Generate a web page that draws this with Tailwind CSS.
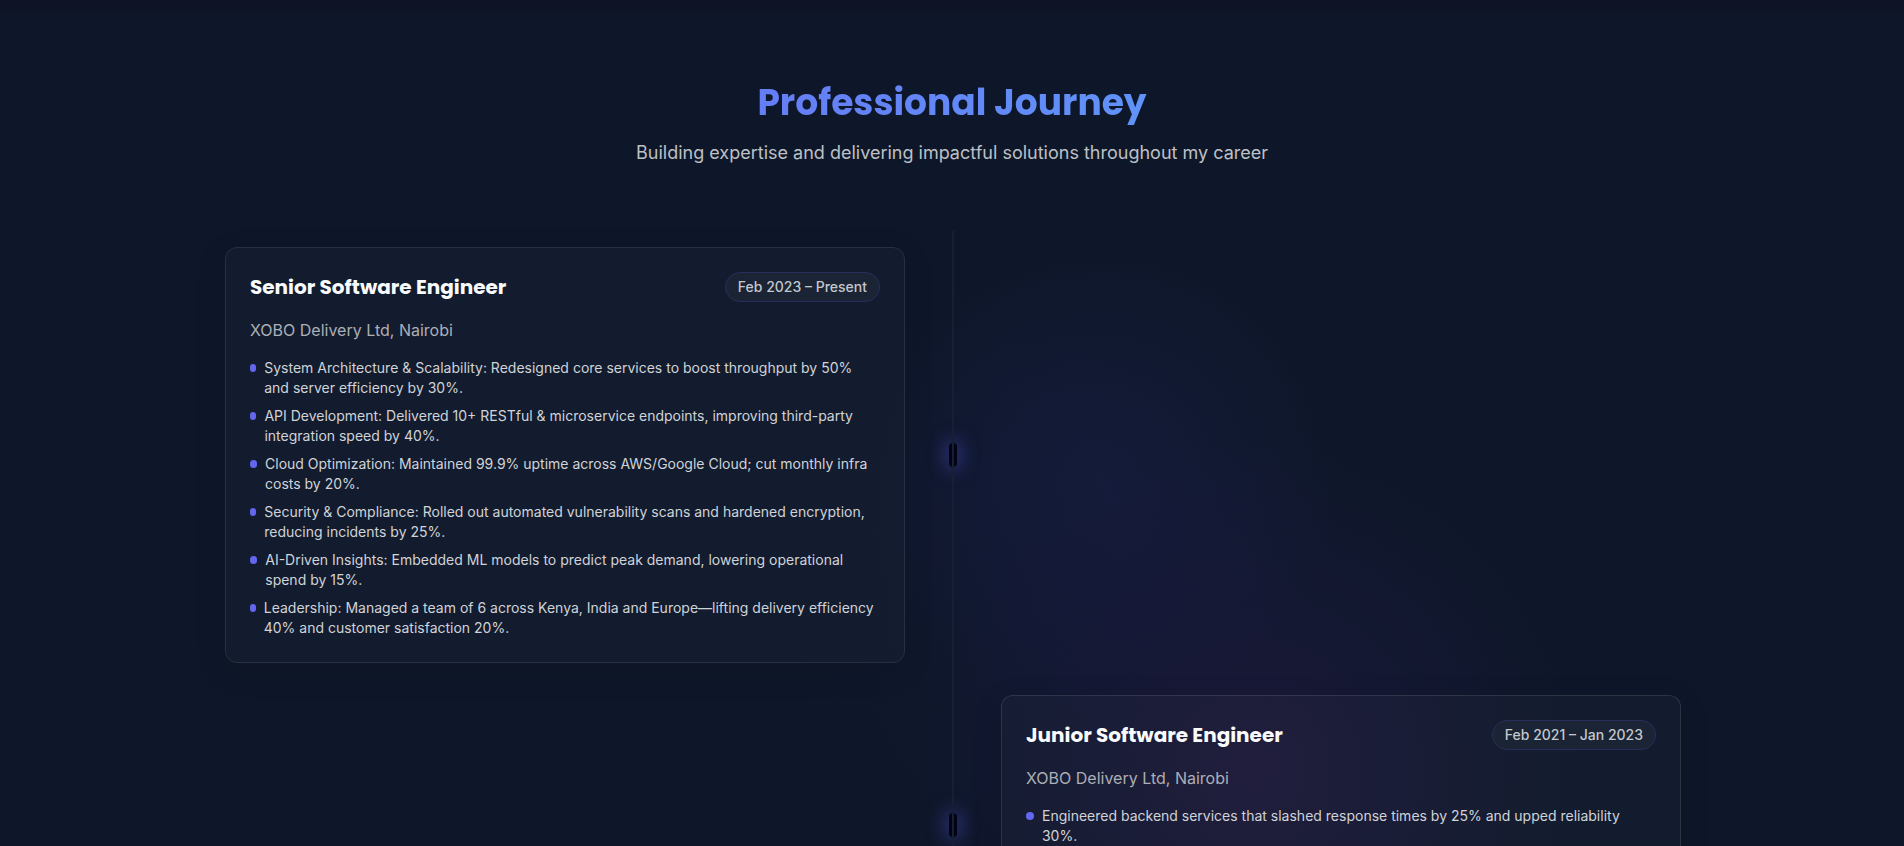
<!DOCTYPE html>
<html lang="en">
<head>
<meta charset="utf-8">
<meta name="viewport" content="width=device-width, initial-scale=1">
<title>Professional Journey</title>
<script src="https://cdn.jsdelivr.net/npm/@tailwindcss/browser@4"></script>
</head>
<body class="h-screen overflow-hidden bg-[#0e1729] font-['Inter',sans-serif] text-[#d0d3d8]">
<main class="relative isolate min-h-screen overflow-hidden bg-linear-to-b from-[#0e1225] to-transparent to-[20px] px-6 pt-20">
  <!-- ambient glow -->
  <div class="absolute -z-10 left-1/2 top-[240px] size-[480px] -translate-x-[90px] bg-[radial-gradient(closest-side,rgba(36,38,96,0.3),rgba(30,32,88,0.16)_55%,transparent)]"></div>
  <div class="absolute -z-10 left-1/2 top-[440px] size-[660px] -translate-x-[30px] bg-[radial-gradient(closest-side,rgba(54,28,88,0.34),rgba(42,26,84,0.2)_50%,transparent)]"></div>
  <div class="absolute -z-10 left-1/2 top-[280px] h-[640px] w-[400px] -translate-x-[160px] bg-[radial-gradient(closest-side,rgba(26,26,72,0.14),transparent)]"></div>

  <header class="flex flex-col items-center gap-4 text-center">
    <h1 class="bg-linear-to-r from-[#657df5] to-[#6092f8] bg-clip-text font-['Poppins','Inter',sans-serif] text-4xl leading-[45px] font-bold text-transparent">Professional Journey</h1>
    <p class="text-lg leading-6 text-[#bdc0c5]">Building expertise and delivering impactful solutions throughout my career</p>
  </header>

  <section class="relative mx-auto mt-[66px] flex max-w-[1458px] flex-col gap-8 pt-4 pl-[2px]">
    <div class="absolute top-0 bottom-0 left-1/2 w-[2px] bg-[#152033]"></div>

    <div class="grid grid-cols-[1fr_96px_1fr] items-center">
      <article class="rounded-xl border border-[#273041] bg-white/[0.025] p-6 shadow-[0_8px_32px_rgba(0,0,0,0.1)]">
        <div class="flex items-center justify-between">
          <h2 class="font-['Poppins','Inter',sans-serif] text-xl leading-[30px] font-bold text-slate-50">Senior Software Engineer</h2>
          <span class="rounded-full border border-[#262f5c] bg-[#1a2434] px-3 py-1 text-sm leading-5 font-medium text-[#c4c7cd]">Feb 2023 – Present</span>
        </div>
        <p class="mt-4 text-base leading-6 text-[#acafb6]">XOBO Delivery Ltd, Nairobi</p>
        <ul class="mt-4 flex flex-col gap-2 text-sm leading-5">
          <li class="flex items-start gap-2"><span class="mt-1.5 h-2 w-2 rounded-full bg-[#6366f1]"></span><span>System Architecture &amp; Scalability: Redesigned core services to boost throughput by 50% and server efficiency by 30%.</span></li>
          <li class="flex items-start gap-2"><span class="mt-1.5 h-2 w-2 rounded-full bg-[#6366f1]"></span><span>API Development: Delivered 10+ RESTful &amp; microservice endpoints, improving third-party integration speed by 40%.</span></li>
          <li class="flex items-start gap-2"><span class="mt-1.5 h-2 w-2 rounded-full bg-[#6366f1]"></span><span>Cloud Optimization: Maintained 99.9% uptime across AWS/Google Cloud; cut monthly infra costs by 20%.</span></li>
          <li class="flex items-start gap-2"><span class="mt-1.5 h-2 w-2 rounded-full bg-[#6366f1]"></span><span>Security &amp; Compliance: Rolled out automated vulnerability scans and hardened encryption, reducing incidents by 25%.</span></li>
          <li class="flex items-start gap-2"><span class="mt-1.5 h-2 w-2 rounded-full bg-[#6366f1]"></span><span>AI-Driven Insights: Embedded ML models to predict peak demand, lowering operational spend by 15%.</span></li>
          <li class="flex items-start gap-2"><span class="mt-1.5 h-2 w-2 rounded-full bg-[#6366f1]"></span><span>Leadership: Managed a team of 6 across Kenya, India and Europe—lifting delivery efficiency 40% and customer satisfaction 20%.</span></li>
        </ul>
      </article>
      <div class="flex h-6 w-2 justify-center justify-self-center rounded-full bg-[#020414] shadow-[0_0_18px_3px_rgba(79,88,220,0.5)]"><span class="w-[2px] bg-[#0e1526]"></span></div>
    </div>

    <div class="grid grid-cols-[1fr_96px_1fr] items-center">
      <div class="col-start-2 flex h-6 w-2 justify-center justify-self-center rounded-full bg-[#020414] shadow-[0_0_18px_3px_rgba(79,88,220,0.5)]"><span class="w-[2px] bg-[#0e1526]"></span></div>
      <article class="min-h-[260px] rounded-xl border border-white/10 bg-white/[0.025] p-6 shadow-[0_8px_32px_rgba(0,0,0,0.1)]">
        <div class="flex items-center justify-between">
          <h2 class="font-['Poppins','Inter',sans-serif] text-xl leading-[30px] font-bold text-slate-50">Junior Software Engineer</h2>
          <span class="rounded-full border border-[#262f5c] bg-[#1a2434] px-3 py-1 text-sm leading-5 font-medium text-[#c4c7cd]">Feb 2021 – Jan 2023</span>
        </div>
        <p class="mt-4 text-base leading-6 text-[#acafb6]">XOBO Delivery Ltd, Nairobi</p>
        <ul class="mt-4 flex flex-col gap-2 text-sm leading-5">
          <li class="flex items-start gap-2"><span class="mt-1.5 h-2 w-2 rounded-full bg-[#6366f1]"></span><span>Engineered backend services that slashed response times by 25% and upped reliability 30%.</span></li>
        </ul>
      </article>
    </div>
  </section>
</main>
</body>
</html>
